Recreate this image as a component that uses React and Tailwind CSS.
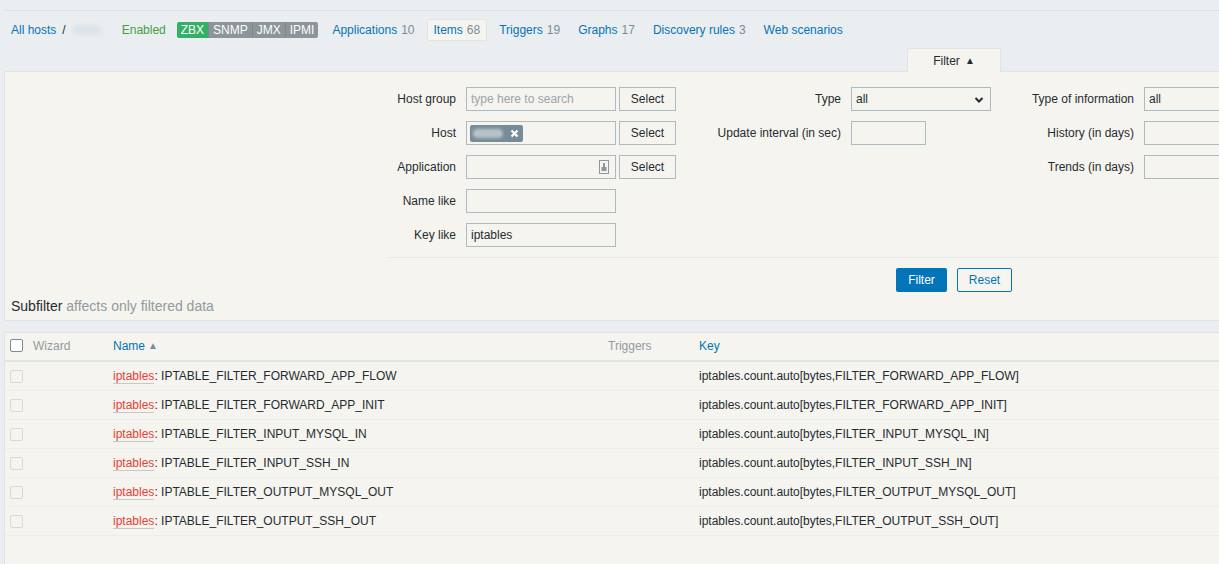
import React from "react";

const BEIGE = "bg-[#f6f4ee]";

function Field({ label, labelW, children }) {
  return (
    <div className="flex items-center h-[24px]">
      <div className="text-right pr-[10px] text-[#1f2c33] shrink-0" style={{ width: labelW }}>
        {label}
      </div>
      {children}
    </div>
  );
}

function Input({ w, value, placeholder, children }) {
  return (
    <div
      className={`h-[24px] border border-[#acbbc2] ${BEIGE} flex items-center px-[4px] shrink-0 relative`}
      style={{ width: w }}
    >
      {value && <span className="text-[#1f2c33]">{value}</span>}
      {placeholder && <span className="text-[#9aa5ab]">{placeholder}</span>}
      {children}
    </div>
  );
}

function SelectBtn() {
  return (
    <button className="ml-[3px] h-[24px] w-[57px] border border-[#acbbc2] bg-[#f6f4ee] text-[#1f2c33] text-[12px]">
      Select
    </button>
  );
}

const rows = [
  ["IPTABLE_FILTER_FORWARD_APP_FLOW", "iptables.count.auto[bytes,FILTER_FORWARD_APP_FLOW]"],
  ["IPTABLE_FILTER_FORWARD_APP_INIT", "iptables.count.auto[bytes,FILTER_FORWARD_APP_INIT]"],
  ["IPTABLE_FILTER_INPUT_MYSQL_IN", "iptables.count.auto[bytes,FILTER_INPUT_MYSQL_IN]"],
  ["IPTABLE_FILTER_INPUT_SSH_IN", "iptables.count.auto[bytes,FILTER_INPUT_SSH_IN]"],
  ["IPTABLE_FILTER_OUTPUT_MYSQL_OUT", "iptables.count.auto[bytes,FILTER_OUTPUT_MYSQL_OUT]"],
  ["IPTABLE_FILTER_OUTPUT_SSH_OUT", "iptables.count.auto[bytes,FILTER_OUTPUT_SSH_OUT]"],
];

export default function App() {
  return (
    <div
      className="w-[1219px] h-[564px] overflow-hidden bg-[#ebeef0] text-[12px] text-[#1f2c33]"
      style={{ fontFamily: '"Liberation Sans", Arial, sans-serif' }}
    >
      <div className="h-[10px]" />
      <div className="ml-[4px] w-[1300px] border-t border-[#dde2e5]">
        {/* nav */}
        <div className="flex items-center pt-[8px] h-[29px]">
          <a className="ml-[7px] text-[#0275b8]">All hosts</a>
          <span className="ml-[6px] text-[#1f2c33]">/</span>
          <span className="ml-[6px] w-[30px] h-[10px] rounded-full bg-[#dce3e9] blur-[2px]" />
          <span className="ml-[20px] text-[#429e47]">Enabled</span>
          <div className="ml-[11px] flex h-[16px] rounded-[2px] overflow-hidden text-white leading-[16px]">
            <span className="px-[4px] bg-[#34af67]">ZBX</span>
            <span className="px-[4px] bg-[#8b959a] border-l border-[#7e878c]">SNMP</span>
            <span className="px-[4px] bg-[#8b959a] border-l border-[#7e878c]">JMX</span>
            <span className="px-[4px] bg-[#8b959a] border-l border-[#7e878c]">IPMI</span>
          </div>
          <div className="ml-[8px] flex items-center gap-[6px]">
            <span className="px-[6px] h-[22px] flex items-center text-[#0275b8]">
              Applications<span className="ml-[4px] text-[#768d99]">10</span>
            </span>
            <span className="px-[6px] h-[22px] flex items-center border border-[#dfe4e7] bg-[#f6f4ee] rounded-[2px] text-[#0275b8]">
              Items<span className="ml-[4px] text-[#768d99]">68</span>
            </span>
            <span className="px-[6px] h-[22px] flex items-center text-[#0275b8]">
              Triggers<span className="ml-[4px] text-[#768d99]">19</span>
            </span>
            <span className="px-[6px] h-[22px] flex items-center text-[#0275b8]">
              Graphs<span className="ml-[4px] text-[#768d99]">17</span>
            </span>
            <span className="px-[6px] h-[22px] flex items-center text-[#0275b8]">
              Discovery rules<span className="ml-[4px] text-[#768d99]">3</span>
            </span>
            <span className="px-[6px] h-[22px] flex items-center text-[#0275b8]">Web scenarios</span>
          </div>
        </div>

        {/* filter tab */}
        <div className="flex mt-[8px]">
          <div className="ml-[903px] w-[94px] h-[24px] -mb-[1px] border border-b-0 border-[#dfe4e7] bg-[#f6f4ee] flex items-center justify-center relative">
            <span className="text-[#1f2c33]">Filter</span>
            <span className="ml-[5px] text-[10px] text-[#1f2c33]">▲</span>
          </div>
        </div>

        {/* filter container */}
        <div className="border border-[#dfe4e7] bg-[#f6f4ee]">
          <div className="ml-[383px] pt-[15px]">
            <div className="flex">
              <div className="flex flex-col gap-[10px]">
                <Field label="Host group" labelW={78}>
                  <Input w={150} placeholder="type here to search" />
                  <SelectBtn />
                </Field>
                <Field label="Host" labelW={78}>
                  <Input w={150}>
                    <div className="h-[17px] w-[53px] -ml-[1px] rounded-[2px] bg-[#768d99] flex items-center px-[3px]">
                      <span className="w-[30px] h-[9px] rounded-full bg-[#b8c3c9] blur-[1.5px]" />
                      <svg width="9" height="9" viewBox="0 0 9 9" className="ml-[7px]">
                        <path d="M1.5 1.5 L7.5 7.5 M7.5 1.5 L1.5 7.5" stroke="white" strokeWidth="2.2" />
                      </svg>
                    </div>
                  </Input>
                  <SelectBtn />
                </Field>
                <Field label="Application" labelW={78}>
                  <Input w={150}>
                    <svg width="10" height="14" viewBox="0 0 10 14" className="absolute right-[6px] top-[4px]">
                      <rect x="0.5" y="0.5" width="9" height="13" fill="#f6f4ee" stroke="#8f969a" />
                      <rect x="2.5" y="7" width="5" height="4" fill="#8f969a" />
                      <rect x="4" y="3" width="2" height="4" fill="#8f969a" />
                    </svg>
                  </Input>
                  <SelectBtn />
                </Field>
                <Field label="Name like" labelW={78}>
                  <Input w={150} />
                </Field>
                <Field label="Key like" labelW={78}>
                  <Input w={150} value="iptables" />
                </Field>
              </div>

              <div className="flex flex-col gap-[10px]">
                <Field label="Type" labelW={175}>
                  <Input w={140} value="all">
                    <svg width="10" height="8" viewBox="0 0 10 8" className="absolute right-[6px] top-[8px]">
                      <path d="M1.5 2 L5 5.5 L8.5 2" stroke="#1f2c33" strokeWidth="2" fill="none" />
                    </svg>
                  </Input>
                </Field>
                <Field label="Update interval (in sec)" labelW={175}>
                  <Input w={75} />
                </Field>
              </div>

              <div className="flex flex-col gap-[10px]">
                <Field label="Type of information" labelW={153}>
                  <Input w={150} value="all" />
                </Field>
                <Field label="History (in days)" labelW={153}>
                  <Input w={150} />
                </Field>
                <Field label="Trends (in days)" labelW={153}>
                  <Input w={150} />
                </Field>
              </div>
            </div>

            <div className="mt-[10px] border-t border-[#e6e8e9]" />
            <div className="mt-[10px] flex ml-[508px]">
              <button className="h-[24px] w-[51px] bg-[#0275b8] text-white rounded-[2px] text-[12px]">
                Filter
              </button>
              <button className="ml-[10px] h-[24px] w-[55px] border border-[#0275b8] bg-[#f6f4ee] text-[#0275b8] rounded-[2px] text-[12px]">
                Reset
              </button>
            </div>
          </div>
          <div className="pl-[6px] mt-[6px] pb-[6px] text-[14px] leading-[16px]">
            <span className="text-[#1f2c33]">Subfilter</span>{" "}
            <span className="text-[#8f9ba1]">affects only filtered data</span>
          </div>
        </div>

        {/* table */}
        <div className="mt-[11px] border border-[#dfe4e7] bg-[#f6f4ee] h-[240px]">
          <div className="flex items-center h-[29px] pb-[2px] border-b-2 border-[#dfe4e7]">
            <div className="w-[28px] pl-[5px] flex items-center">
              <span className="w-[13px] h-[13px] rounded-[2px] border border-[#768d99] bg-white" />
            </div>
            <div className="w-[80px] text-[#8f9ba1]">Wizard</div>
            <div className="w-[495px] text-[#0275b8] flex items-center">
              Name<span className="ml-[3px] text-[10px] text-[#768d99]">▲</span>
            </div>
            <div className="w-[91px] text-[#8f9ba1]">Triggers</div>
            <div className="text-[#0275b8]">Key</div>
          </div>
          {rows.map(([name, key]) => (
            <div key={name} className="flex items-center h-[29px] border-b border-[#ebeef0]">
              <div className="w-[28px] pl-[5px] flex items-center">
                <span className="w-[13px] h-[13px] rounded-[2px] border border-[#d5d9db] bg-[#f6f4ee]" />
              </div>
              <div className="w-[80px]" />
              <div className="w-[495px] flex items-center">
                <span className="text-[#e54236] border-b border-[#c5c8ca] leading-[14px]">iptables</span>
                <span className="text-[#1f2c33]">: {name}</span>
              </div>
              <div className="w-[91px]" />
              <div className="text-[#1f2c33]">{key}</div>
            </div>
          ))}
        </div>
      </div>
    </div>
  );
}
